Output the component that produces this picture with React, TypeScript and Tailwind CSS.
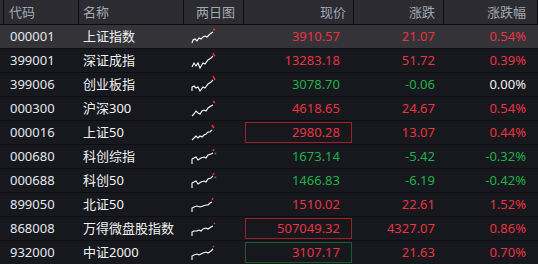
import React from "react";

type Row = {
  code: string;
  name: string;
  price: string;
  chg: string;
  pct: string;
  pc: "r" | "g";
  cc: "r" | "g";
  tc: "r" | "g" | "w";
  box?: "r" | "g";
  sel?: boolean;
  w: string;
  red: string;
  green?: string;
};

const rows: Row[] = [
  { code: "000001", name: "上证指数", price: "3910.57", chg: "21.07", pct: "0.54%", pc: "r", cc: "r", tc: "r", sel: true, w: "2,16 3,13 5,12 7,14 9,11 11,12 13,10 15,9 17,10 20,7 23,5", red: "23,2 25,3" },
  { code: "399001", name: "深证成指", price: "13283.18", chg: "51.72", pct: "0.39%", pc: "r", cc: "r", tc: "r", w: "2,16 4,12 6,15 8,12 10,17 13,12 15,13 18,9 21,7 23,5", red: "23,2 24,4 25,5" },
  { code: "399006", name: "创业板指", price: "3078.70", chg: "-0.06", pct: "0.00%", pc: "g", cc: "g", tc: "w", w: "2,16 2,12 4,11 6,13 8,12 10,16 13,12 15,13 18,9 21,7 23,5", red: "23,1 24,3 25,5" },
  { code: "000300", name: "沪深300", price: "4618.65", chg: "24.67", pct: "0.54%", pc: "r", cc: "r", tc: "r", w: "2,17 4,15 6,12 8,14 10,15 12,12 14,11 16,12 18,9 21,7 23,6", red: "23,2 25,4" },
  { code: "000016", name: "上证50", price: "2980.28", chg: "13.07", pct: "0.44%", pc: "r", cc: "r", tc: "r", box: "r", w: "2,17 4,15 6,13 8,15 10,13 12,14 14,12 16,11 18,9 20,9 22,7", red: "22,2 24,5" },
  { code: "000680", name: "科创综指", price: "1673.14", chg: "-5.42", pct: "-0.32%", pc: "g", cc: "g", tc: "g", w: "2,17 2,12 4,11 6,10 8,13 11,11 14,10 16,11 18,8 21,7 23,6", red: "23,4 24,2", green: "25,6 26,7" },
  { code: "000688", name: "科创50", price: "1466.83", chg: "-6.19", pct: "-0.42%", pc: "g", cc: "g", tc: "g", w: "2,17 2,12 4,11 6,10 8,13 11,11 14,10 16,11 18,8 21,7 23,5", red: "23,4 24,2", green: "25,6 26,7" },
  { code: "899050", name: "北证50", price: "1510.02", chg: "22.61", pct: "1.52%", pc: "r", cc: "r", tc: "r", w: "2,17 2,13 4,12 7,11 10,12 13,11 16,10 18,10 20,8 22,7", red: "22,5 23,3" },
  { code: "868008", name: "万得微盘股指数", price: "507049.32", chg: "4327.07", pct: "0.86%", pc: "r", cc: "r", tc: "r", box: "r", w: "2,17 2,13 4,12 7,12 9,11 11,12 13,10 16,9 18,10 21,8 23,7", red: "24,5 25,4" },
  { code: "932000", name: "中证2000", price: "3107.17", chg: "21.63", pct: "0.70%", pc: "r", cc: "r", tc: "r", box: "g", w: "2,17 2,13 4,12 7,11 9,12 11,11 13,10 16,9 18,10 21,8 23,6", red: "23,4 24,3" },
];

const color = (c: "r" | "g" | "w") =>
  c === "r" ? "text-[#ea3341]" : c === "g" ? "text-[#1fb14a]" : "text-[#eef0f2]";

function Spark({ r }: { r: Row }) {
  return (
    <svg width="28" height="20" viewBox="0 0 28 20" className="block">
      <polyline points={r.w} fill="none" stroke="#ffffff" strokeWidth="1.1" strokeLinejoin="miter" />
      <polyline points={r.red} fill="none" stroke="#ee2b39" strokeWidth="1.6" />
      {r.green && <polyline points={r.green} fill="none" stroke="#1fb14a" strokeWidth="1.4" />}
    </svg>
  );
}

export default function App() {
  const font = { fontFamily: '"Noto Sans", "Noto Sans CJK SC", sans-serif' };
  return (
    <div className="w-[538px] h-[264px] overflow-hidden bg-[#16181d] text-[13px] leading-none" style={font}>
      <div className="grid grid-cols-[78px_105px_60px_110px_90px_95px] h-[25px] bg-[#2b2b31] border-b border-[#0b0c0f] text-[#a3a9b1]">
        <div className="ml-[3px] border-l border-[#0b0c0f] flex items-center pl-[5px]">代码</div>
        <div className="border-l border-[#0b0c0f] flex items-center pl-[4px]">名称</div>
        <div className="border-l border-[#0b0c0f] flex items-center justify-end pr-[8px]">两日图</div>
        <div className="border-l border-[#0b0c0f] flex items-center justify-end pr-[7px]">现价</div>
        <div className="border-l border-[#0b0c0f] flex items-center justify-end pr-[8px]">涨跌</div>
        <div className="border-l border-[#0b0c0f] border-r flex items-center justify-end pr-[11px]">涨跌幅</div>
      </div>
      {rows.map((r) => (
        <div
          key={r.code}
          className={`grid grid-cols-[78px_105px_60px_110px_90px_95px] h-[24px] border-b border-[#0c0e11] ${r.sel ? "bg-[#333338]" : "bg-[#16181d]"}`}
        >
          <div className="flex items-center pl-[10px] text-[#e3e8ee]">{r.code}</div>
          <div className="flex items-center pl-[5px] text-[#f2f2f2]">{r.name}</div>
          <div className="flex items-center pl-[7px]">
            <Spark r={r} />
          </div>
          <div className="flex items-center pl-[2px] pr-[1px]">
            <div
              className={`w-full h-[21px] flex items-center justify-end pr-[11px] border ${
                r.box === "r" ? "border-[#a31d27]" : r.box === "g" ? "border-[#1d5a2c]" : "border-transparent"
              } ${color(r.pc)}`}
            >
              {r.price}
            </div>
          </div>
          <div className={`flex items-center justify-end pr-[8px] ${color(r.cc)}`}>{r.chg}</div>
          <div className={`flex items-center justify-end pr-[12px] ${color(r.tc)}`}>{r.pct}</div>
        </div>
      ))}
    </div>
  );
}
